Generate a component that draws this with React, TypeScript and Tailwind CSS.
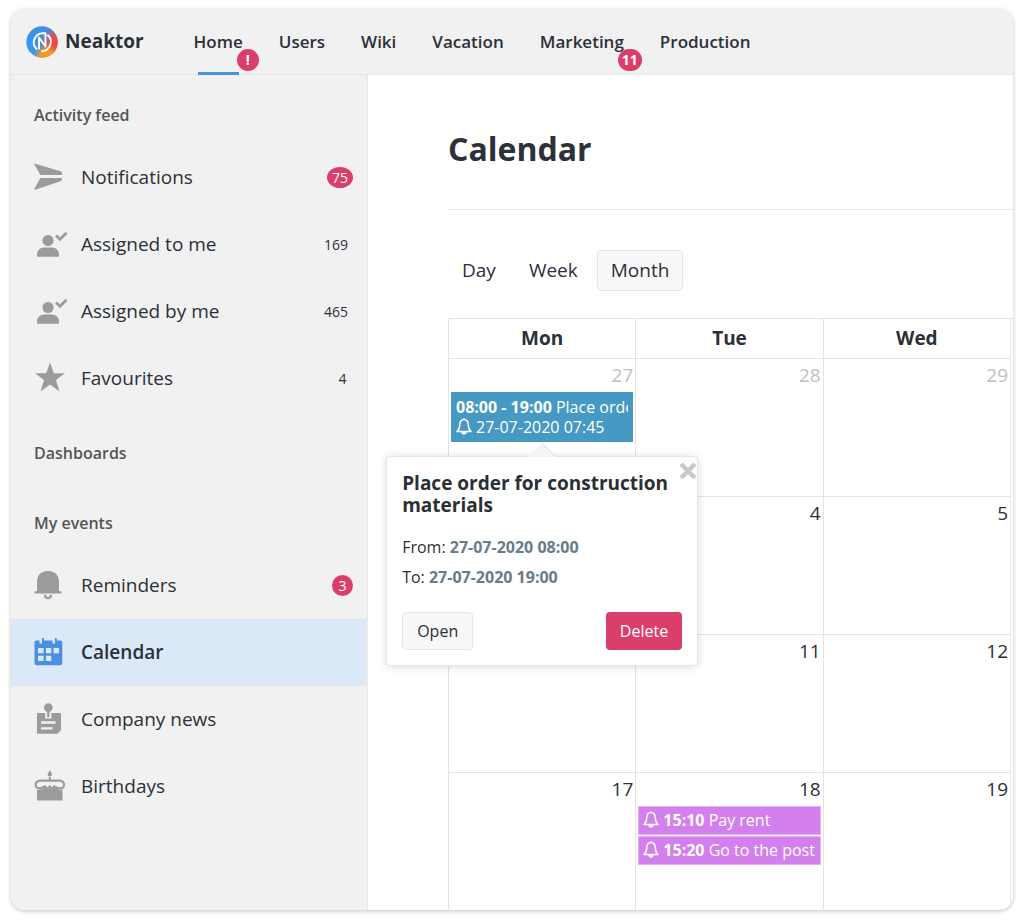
import { ReactNode, useState } from "react"

type Item = {
    label: string
    icon: ReactNode
    count?: string
    alert?: boolean
}

type CalendarEvent = {
    time: string
    title: string
    reminder?: string
}

type Day = {
    day: string
    muted?: boolean
    events?: CalendarEvent[]
}

const SendIcon = () => (
    <svg viewBox="1 0 32 32" className="size-8" fill="currentColor">
        <path d="M1.5 3.6Q0.400 2.200 2.200 2.700L27.500 10.300Q29 10.900 29 12.100V14H7.300Z" />
        <path d="M1.500 27.700Q0.400 29.200 2.200 28.700L27.500 20.300Q29 19.700 29 18.500V16.900H7.300Z" />
    </svg>
)

const UserCheckIcon = () => (
    <svg viewBox="0 0 34 32" className="h-8 w-[34px]" fill="currentColor">
        <circle cx="14" cy="12.500" r="5.600" />
        <path d="M3 28.800V27Q3 19.400 10.500 19.400H17.500Q25 19.400 25 27V28.800Z" />
        <path d="M22 7.500L26 11.300L32.500 4.700" fill="none" stroke="currentColor" strokeWidth="2.800" />
    </svg>
)

const StarIcon = () => (
    <svg viewBox="0 0 32 32" className="size-8" fill="currentColor">
        <path d="M16 0.500L19.800 11.300H31L22 18L25.400 29.500L16 22.600L6.600 29.500L10 18L1 11.300H12.200Z" />
    </svg>
)

const BellIcon = () => (
    <svg viewBox="0 0 32 32" className="size-8" fill="currentColor">
        <path d="M14 2C6 2 3 7 3 13V22.200H1Q0.500 22.200 0.500 23V24.500H27.500V23Q27.500 22.200 27 22.200H25V13C25 7 22 2 14 2Z" />
        <path d="M11 25.800Q11 29.200 14 29.200T17 25.800" fill="none" stroke="currentColor" strokeWidth="2.200" />
    </svg>
)

const CalendarIcon = () => (
    <svg viewBox="0 0 32 32" className="size-8" fill="currentColor">
        <path fillRule="evenodd" d="M2 4.500H5.500V7.500H8V2H9.800V4.500H18.500V7.500H21V2H22.800V4.500H26.500Q28.300 4.500 28.300 6.500V27Q28.300 29.300 26 29.300H2.600Q0.500 29.300 0.500 27V6.500Q0.500 4.500 2 4.500ZM4 12V17.300H9.600V12ZM11.900 12V17.300H17.300V12ZM19.600 12V17.300H25V12ZM4 19.700V25H9.600V19.700ZM11.900 19.700V25H17.300V19.700Z" />
    </svg>
)

const NewsIcon = () => (
    <svg viewBox="0 0 32 32" className="size-8" fill="currentColor">
        <circle cx="14.300" cy="4.600" r="4.300" />
        <rect x="13.100" y="7" width="2.400" height="7" />
        <path fillRule="evenodd" d="M4 10H11.200V15.500H17.400V10H26Q27 10 27 11V27L23.500 30.800H4Q3 30.800 3 29.800V11Q3 10 4 10ZM7 18.300V20.700H21.500V18.300ZM7 24.200V26.600H18.500V24.200Z" />
    </svg>
)

const CakeIcon = () => (
    <svg viewBox="0 0 32 32" className="size-8" fill="currentColor">
        <path d="M15.800 0C16.500 2 18 3 18 4.500A2.200 2 0 0 1 13.600 4.500C13.600 3 15.100 2 15.800 0Z" />
        <rect x="14.800" y="7.200" width="2" height="3.500" />
        <path d="M6 10.700H25.600Q30 11.200 30 15T25.500 18.300Q23 18.300 20.300 16.500Q18 19.700 15.800 16.500Q13 19.700 10.700 16.500Q8 18.300 5.500 18.300Q1.600 18 1.600 14.800T6 10.700Z" fill="none" stroke="currentColor" strokeWidth="2.200" />
        <path d="M3 19.500Q7 20.500 10.700 17.800Q13.500 20.500 15.800 17.800Q18.500 20.500 20.500 17.800Q24.500 20.500 28.500 19.500V30.500H3Z" />
    </svg>
)

const ReminderBell = () => (
    <svg viewBox="0 0 16 17" className="mr-1 inline-block h-[17px] w-4 align-[-2px]" fill="none" stroke="currentColor" strokeWidth="1.500" strokeLinejoin="round">
        <path d="M8 1.500C4.900 1.500 3.800 4 3.700 7C3.600 10.500 2.800 12 1 13.500H15C13.200 12 12.400 10.500 12.300 7C12.200 4 11.100 1.500 8 1.500Z" />
        <path d="M6 14.300Q6.500 16 8 16T10 14.300Z" fill="currentColor" />
        <path d="M8 0.500V1.500" strokeWidth="2" />
    </svg>
)

const Logo = () => (
    <svg viewBox="0 0 32 32" className="size-8">
        <defs>
            <linearGradient id="base" x1="0" y1="1" x2="1" y2="0">
                <stop offset="0" stopColor="#2e9df2" />
                <stop offset="1" stopColor="#4a86dc" />
            </linearGradient>
            <radialGradient id="red" cx="1" cy="0.600" r="0.580">
                <stop offset="0" stopColor="#f4473c" />
                <stop offset="0.400" stopColor="#f4473c" />
                <stop offset="1" stopColor="#f4473c" stopOpacity="0" />
            </radialGradient>
            <radialGradient id="orange" cx="0.650" cy="1" r="0.450">
                <stop offset="0" stopColor="#fb9a1e" />
                <stop offset="0.450" stopColor="#fb9a1e" />
                <stop offset="1" stopColor="#fb9a1e" stopOpacity="0" />
            </radialGradient>
        </defs>
        <circle cx="16" cy="16" r="15.700" fill="url(#base)" />
        <circle cx="16" cy="16" r="15.700" fill="url(#red)" />
        <circle cx="16" cy="16" r="15.700" fill="url(#orange)" />
        <g fill="none" stroke="#fff" strokeWidth="1.900" strokeLinecap="round" strokeLinejoin="round">
            <path d="M10.500 23A9.300 9.300 0 0 1 16 7.200H19.500V20.500L13 11.500V22.500" />
            <path d="M22 9.200A9.300 9.300 0 0 1 16 25.200" />
        </g>
    </svg>
)

const tabs = [
    { label: "Home", badge: "!" },
    { label: "Users" },
    { label: "Wiki" },
    { label: "Vacation" },
    { label: "Marketing", badge: "11" },
    { label: "Production" }
]

const feed: Item[] = [
    { label: "Notifications", icon: <SendIcon />, count: "75", alert: true },
    { label: "Assigned to me", icon: <UserCheckIcon />, count: "169" },
    { label: "Assigned by me", icon: <UserCheckIcon />, count: "465" },
    { label: "Favourites", icon: <StarIcon />, count: "4" }
]

const myEvents: Item[] = [
    { label: "Reminders", icon: <BellIcon />, count: "3", alert: true },
    { label: "Calendar", icon: <CalendarIcon /> },
    { label: "Company news", icon: <NewsIcon /> },
    { label: "Birthdays", icon: <CakeIcon /> }
]

const weeks: Day[][] = [
    [
        { day: "27", muted: true, events: [{ time: "08:00 - 19:00", title: "Place order for construction materials", reminder: "27-07-2020 07:45" }] },
        { day: "28", muted: true },
        { day: "29", muted: true }
    ],
    [{ day: "3" }, { day: "4" }, { day: "5" }],
    [{ day: "10" }, { day: "11" }, { day: "12" }],
    [
        { day: "17" },
        { day: "18", events: [{ time: "15:10", title: "Pay rent" }, { time: "15:20", title: "Go to the post" }] },
        { day: "19" }
    ]
]

const Popup = ({ onClose }: { onClose: () => void }) => (
    <div className="absolute top-full left-1/2 z-10 mt-[14px] w-[312px] -translate-x-1/2 rounded border border-[#e6e6e6] bg-white p-[15px] text-[#2a2f36] shadow-[0_1px_8px_rgba(0,0,0,0.14)]">
        <svg viewBox="0 0 28 14" className="absolute -top-3.5 left-1/2 h-3.5 w-7 -translate-x-1/2">
            <path d="M0 14L14 0L28 14Z" fill="#f5f5f5" />
            <path d="M14 0L28 14" stroke="#dcdcdc" />
        </svg>
        <button type="button" aria-label="Close" onClick={onClose} className="absolute top-[5px] right-0 text-[#c9c9c9]">
            <svg viewBox="0 0 18 18" className="size-[18px]" stroke="currentColor" strokeWidth="4.500">
                <path d="M2 2L16 16M16 2L2 16" />
            </svg>
        </button>
        <h2 className="text-[19px] leading-[22px] font-bold">Place order for construction materials</h2>
        <div className="mt-4 text-base leading-[30px]">
            <p>From: <b className="text-[#667c89]">27-07-2020 08:00</b></p>
            <p>To: <b className="text-[#667c89]">27-07-2020 19:00</b></p>
        </div>
        <div className="mt-5 flex justify-between text-base">
            <button type="button" className="h-[38px] rounded border border-[#e6e6e6] bg-[#f8f8f8] px-[14px]">Open</button>
            <button type="button" className="h-[38px] rounded bg-[#da3f6b] px-[14px] text-white">Delete</button>
        </div>
    </div>
)

const SideList = ({ items, active, onSelect }: { items: Item[], active: string, onSelect: (label: string) => void }) => (
    <ul className="pr-px">
        {items.map(item => {
            const selected = item.label === active
            return (
                <li key={item.label}>
                    <button
                        type="button"
                        onClick={() => onSelect(item.label)}
                        className={`flex h-[67px] w-full items-center pr-[13px] pl-[23px] text-left ${selected ? "bg-[#dbe8f8]" : ""}`}
                    >
                        <span className={`w-[47px] pb-[2px] ${selected ? "text-[#4a90e2]" : "text-[#9b9b9b]"}`}>{item.icon}</span>
                        <span className={`flex-1 text-[19px] ${selected ? "font-semibold" : ""}`}>{item.label}</span>
                        {item.count && (
                            <span className={item.alert
                                ? "flex h-[21px] min-w-[21px] items-center justify-center rounded-[50%] bg-[#da3f6b] px-[5px] text-sm text-white"
                                : "min-w-[21px] px-[5px] text-center text-sm"}
                            >
                                {item.count}
                            </span>
                        )}
                    </button>
                </li>
            )
        })}
    </ul>
)

const App = () => {
    const [active, setActive] = useState<string>("Calendar")
    const [mode, setMode] = useState<string>("Month")
    const [popup, setPopup] = useState<boolean>(true)

    return (
        <div className="h-screen bg-white pt-[9px] pr-[11px] pb-[11px] pl-[11px] font-['Open_Sans','Noto_Sans',sans-serif] text-[#2b3039]">
            <div className="flex h-full flex-col overflow-hidden rounded-[14px] bg-white shadow-[0_1px_4px_rgba(0,0,0,0.25)]">
                <header className="flex h-[66px] shrink-0 items-center border-b border-[#e6e6e6] bg-[#f1f1f1] pl-[15px]">
                    <a href="#" className="flex items-center gap-[7px] text-[19px] font-bold">
                        <Logo />
                        Neaktor
                    </a>
                    <nav className="ml-[50px] flex h-full gap-9">
                        {tabs.map((tab, i) => (
                            <a key={tab.label} href="#" className="relative flex h-full items-center text-[17px] font-semibold">
                                {tab.label}
                                {i === 0 && <span className="absolute inset-x-1 -bottom-px h-[3px] bg-[#4a90e2]" />}
                                {tab.badge && (
                                    <span className="absolute top-10 left-full -ml-1.5 flex h-[22px] min-w-[22px] items-center justify-center rounded-full bg-[#da3f6b] px-1 text-sm font-bold text-white">
                                        {tab.badge}
                                    </span>
                                )}
                            </a>
                        ))}
                    </nav>
                </header>

                <div className="flex min-h-0 flex-1">
                    <aside className="w-[357px] shrink-0 border-r border-[#e6e6e6] bg-[#f1f1f1] pt-7">
                        <h3 className="mb-[17px] pl-[23px] text-base font-semibold text-[#555]">Activity feed</h3>
                        <SideList items={feed} active={active} onSelect={setActive} />
                        <h3 className="mt-[29px] pl-[23px] text-base font-semibold text-[#555]">Dashboards</h3>
                        <h3 className="mt-[46px] mb-[17px] pl-[23px] text-base font-semibold text-[#555]">My events</h3>
                        <SideList items={myEvents} active={active} onSelect={setActive} />
                    </aside>

                    <main className="min-w-0 flex-1 overflow-hidden pl-20">
                        <h1 className="border-b border-[#e6e6e6] pt-[49px] pb-9 text-[32px] leading-[49px] font-bold">Calendar</h1>
                        <div className="mt-10 flex gap-[5px]">
                            {["Day", "Week", "Month"].map(name => (
                                <button
                                    key={name}
                                    type="button"
                                    onClick={() => setMode(name)}
                                    className={`h-[41px] rounded border px-[13px] text-[19px] ${mode === name ? "border-[#e6e6e6] bg-[#f8f8f8]" : "border-transparent"}`}
                                >
                                    {name}
                                </button>
                            ))}
                        </div>

                        <div className="mt-[27px] border-t border-l border-[#e3e3e3] pr-[2px]">
                            <table className="w-full table-fixed border-separate border-spacing-0">
                                <thead>
                                    <tr>
                                        {["Mon", "Tue", "Wed"].map(name => (
                                            <th key={name} className="h-10 border-r border-b border-[#e3e3e3] text-[19px] font-bold">{name}</th>
                                        ))}
                                    </tr>
                                </thead>
                                <tbody>
                                    {weeks.map((week, i) => (
                                        <tr key={i}>
                                            {week.map(day => (
                                                <td key={day.day} className="h-[138px] border-r border-b border-[#e3e3e3] px-[2px] align-top">
                                                    <p className={`pt-px pb-[2px] text-right text-[19px] leading-[30px] ${day.muted ? "text-[#c0c0c0]" : ""}`}>{day.day}</p>
                                                    {day.events?.map(event => (
                                                        <div key={event.time} className="relative">
                                                            <button
                                                                type="button"
                                                                onClick={() => event.reminder && setPopup(true)}
                                                                className={`block w-full border px-1 text-left text-base leading-5 text-white ${event.reminder ? "border-[#4699c2] bg-[#4699c2] py-1" : "mb-px h-[29px] border-[#e3b0f3] bg-[#d37fee] pb-[2px]"}`}
                                                            >
                                                                <span className="block overflow-hidden whitespace-nowrap">
                                                                    {!event.reminder && <ReminderBell />}
                                                                    <b>{event.time}</b> {event.title}
                                                                </span>
                                                                {event.reminder && (
                                                                    <span className="block"><ReminderBell />{event.reminder}</span>
                                                                )}
                                                            </button>
                                                            {event.reminder && popup && <Popup onClose={() => setPopup(false)} />}
                                                        </div>
                                                    ))}
                                                </td>
                                            ))}
                                        </tr>
                                    ))}
                                </tbody>
                            </table>
                        </div>
                    </main>
                </div>
            </div>
        </div>
    )
}

export default App
